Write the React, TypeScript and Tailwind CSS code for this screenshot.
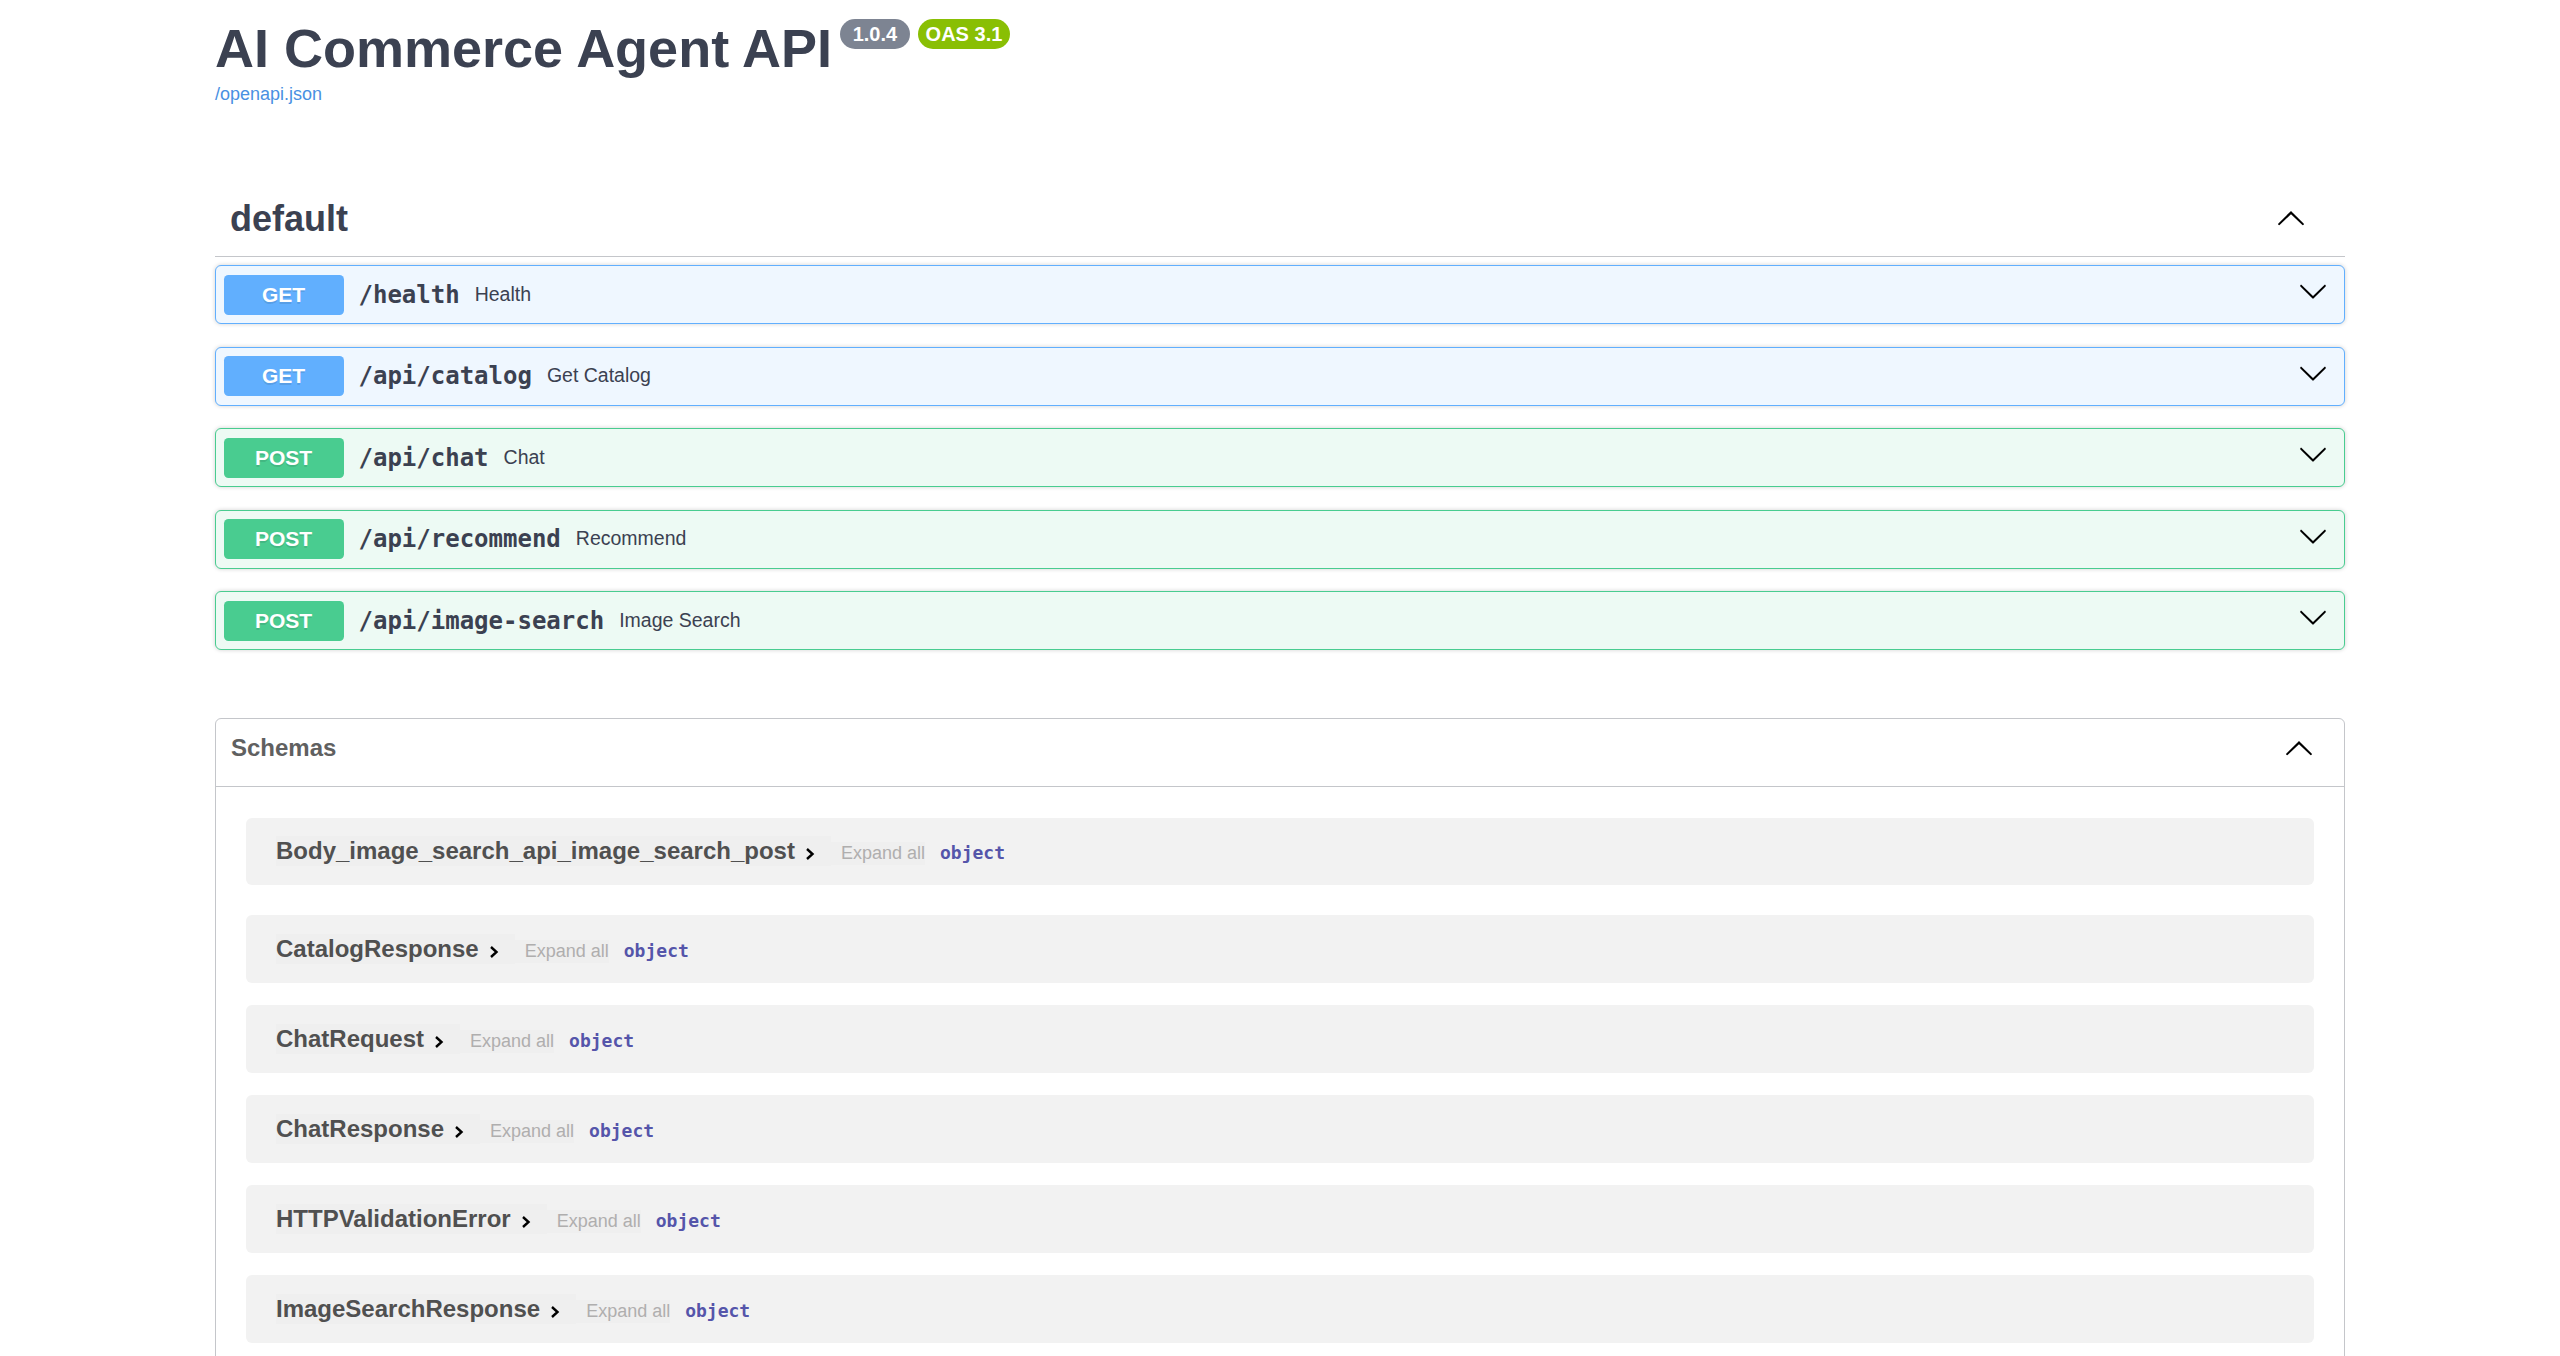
const operations = [
  { method: 'GET', path: '/health', summary: 'Health' },
  { method: 'GET', path: '/api/catalog', summary: 'Get Catalog' },
  { method: 'POST', path: '/api/chat', summary: 'Chat' },
  { method: 'POST', path: '/api/recommend', summary: 'Recommend' },
  { method: 'POST', path: '/api/image-search', summary: 'Image Search' },
];

const schemas = [
  'Body_image_search_api_image_search_post',
  'CatalogResponse',
  'ChatRequest',
  'ChatResponse',
  'HTTPValidationError',
  'ImageSearchResponse',
];

function LargeArrow({ up = false }: { up?: boolean }) {
  return (
    <svg width="30" height="30" viewBox="0 0 20 20" className={up ? 'rotate-180' : ''} aria-hidden="true">
      <path d="M17.418 6.109c.272-.268.709-.268.979 0s.271.701 0 .969l-7.908 7.83c-.27.268-.707.268-.979 0l-7.908-7.83c-.27-.268-.27-.701 0-.969.271-.268.709-.268.979 0L10 13.25l7.418-7.141z" />
    </svg>
  );
}

function OpBlock({ method, path, summary }: { method: string; path: string; summary: string }) {
  const isGet = method === 'GET';
  return (
    <div
      className={
        isGet
          ? 'flex items-center h-[59px] px-[7.5px] rounded-[6px] border border-[#61affe] bg-[#eff7ff] shadow-[0_0_4.5px_rgba(0,0,0,0.19)]'
          : 'flex items-center h-[59px] px-[7.5px] rounded-[6px] border border-[#49cc90] bg-[#edfaf4] shadow-[0_0_4.5px_rgba(0,0,0,0.19)]'
      }
    >
      <span
        className={
          isGet
            ? 'w-[120px] h-[40px] leading-[40px] text-center rounded-[4.5px] bg-[#61affe] text-white text-[21px] font-bold [text-shadow:0_1.5px_0_rgba(0,0,0,0.1)]'
            : 'w-[120px] h-[40px] leading-[40px] text-center rounded-[4.5px] bg-[#49cc90] text-white text-[21px] font-bold [text-shadow:0_1.5px_0_rgba(0,0,0,0.1)]'
        }
      >
        {method}
      </span>
      <span className="px-[15px] font-['DejaVu_Sans_Mono',monospace] text-[24px] font-bold text-[#3b4151]">{path}</span>
      <span className="text-[19.5px] text-[#3b4151]">{summary}</span>
      <button className="ml-auto pr-[9px] mb-[7px]">
        <LargeArrow />
      </button>
    </div>
  );
}

function SchemaRow({ name }: { name: string }) {
  return (
    <div className="flex items-center h-[67.5px] pl-[30px] rounded-[6px] bg-[#f2f2f2]">
      <div className="flex items-baseline">
        <button className="flex items-center h-[30px] leading-[30px] pr-[15px] bg-[#efefef] text-[24px] font-bold text-[#505050]">
          {name}
          <svg width="12" height="14" viewBox="0 0 12 14" className="ml-[9px] translate-y-[3px]" aria-hidden="true">
            <polyline points="3,2 8.5,7 3,12" fill="none" stroke="#000" strokeWidth="2.4" />
          </svg>
        </button>
        <span className="h-[23px] leading-[23px] pl-[10px] bg-[#efefef] text-[18px] text-[#afaeae]">Expand all</span>
        <span className="ml-[15px] font-['DejaVu_Sans_Mono',monospace] text-[18px] font-bold text-[#5555aa]">object</span>
      </div>
    </div>
  );
}

export default function App() {
  return (
    <div className="h-[1356px] overflow-hidden bg-white font-['Liberation_Sans',Arial,sans-serif]">
      <div className="max-w-[2190px] mx-auto px-[30px] pt-[17px]">
        {/* info */}
        <div className="flex items-start">
          <h2 className="text-[54px] leading-[62px] font-bold text-[#3b4151]">AI Commerce Agent API</h2>
          <span className="ml-[7.5px] mt-[2px] h-[30px] leading-[30px] px-[13px] rounded-full bg-[#7d8492] text-white text-[20px] font-bold">
            1.0.4
          </span>
          <span className="ml-[7.5px] mt-[2px] h-[30px] leading-[30px] px-[8px] rounded-full bg-[#89bf04] text-white text-[20px] font-bold">
            OAS 3.1
          </span>
        </div>
        <a href="#" className="block mt-[5px] text-[18px] leading-[21px] text-[#4990e2]">
          /openapi.json
        </a>

        {/* default tag */}
        <h3 className="mt-[77px] flex items-center pt-[15px] pb-[15px] pl-[15px] pr-[30px] border-b border-[rgba(59,65,81,0.3)]">
          <span className="h-[44px] leading-[44px] text-[36px] font-bold text-[#3b4151]">default</span>
          <button className="ml-auto pr-[9px]">
            <LargeArrow up />
          </button>
        </h3>
        <div className="mt-[8px] flex flex-col gap-[22.5px]">
          {operations.map((op) => (
            <OpBlock key={op.path} {...op} />
          ))}
        </div>

        {/* schemas */}
        <section className="mt-[67.5px] rounded-[6px] border border-[rgba(59,65,81,0.3)]">
          <h4 className="flex items-start h-[68px] pt-[15px] pl-[15px] pr-[30px] border-b border-[rgba(59,65,81,0.3)]">
            <span className="text-[24px] leading-[28px] font-bold text-[#606060]">Schemas</span>
            <button className="ml-auto">
              <LargeArrow up />
            </button>
          </h4>
          <div className="mt-[31px] mx-[30px] pb-[7.5px] flex flex-col">
            {schemas.map((s, i) => (
              <div key={s} className={i === 0 ? 'mb-[30px]' : 'mb-[22.5px]'}>
                <SchemaRow name={s} />
              </div>
            ))}
          </div>
        </section>
      </div>
    </div>
  );
}
